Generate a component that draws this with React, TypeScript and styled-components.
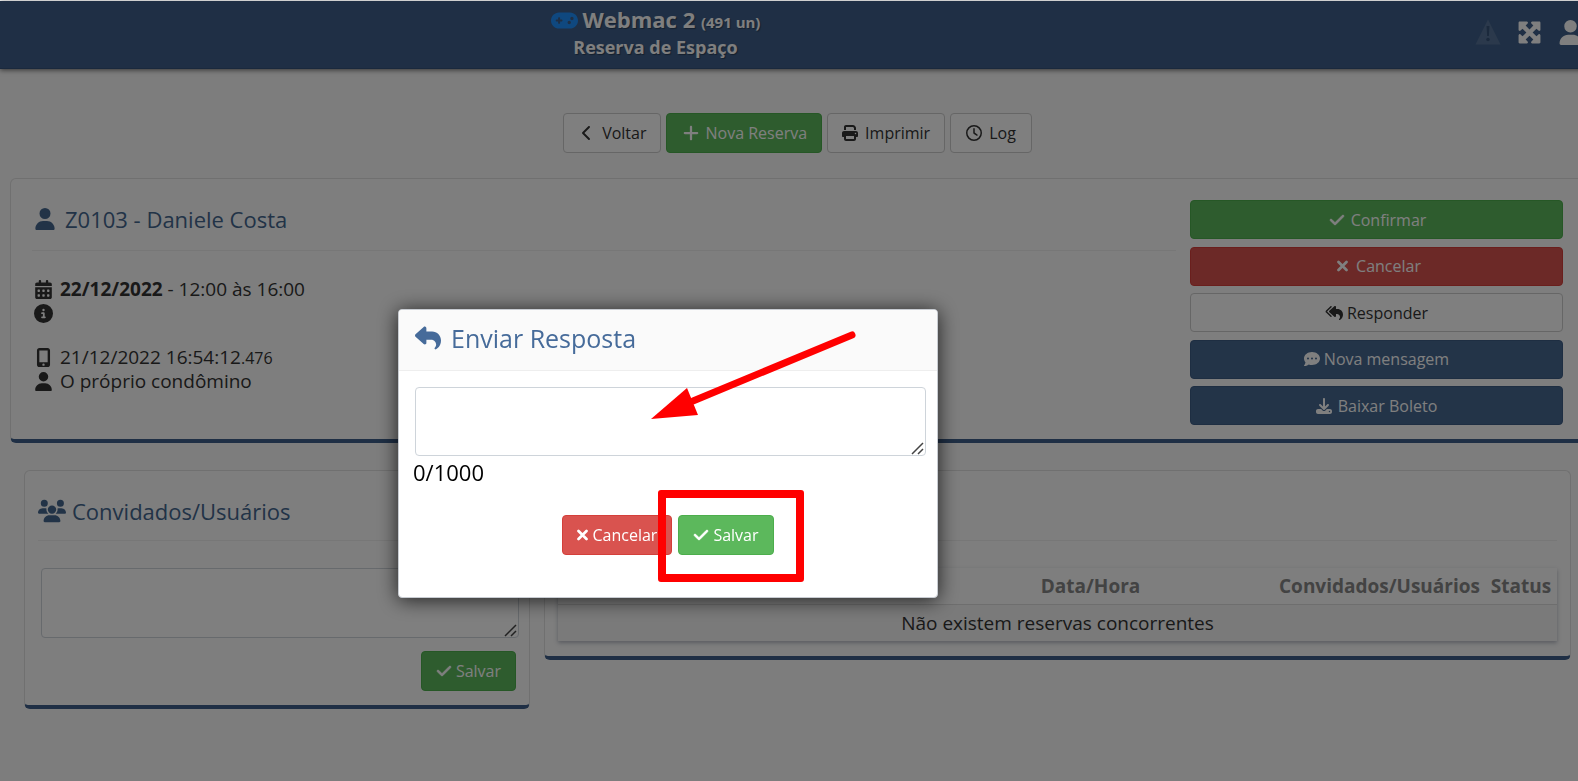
import React from "react";
import styled, { createGlobalStyle, css } from "styled-components";
import {
  FaGamepad, FaMaximize, FaUser, FaChevronLeft, FaPlus, FaPrint, FaRegClock, FaCheck,
  FaReplyAll, FaReply, FaCommentDots, FaDownload, FaCalendarDays, FaCircleInfo,
  FaMobileScreenButton, FaUsers,
} from "react-icons/fa6";

const blue = "#44678f";
const navy = "#3e5f8a";

const GlobalStyle = createGlobalStyle`
  *, *::before, *::after { box-sizing: border-box; }
  body {
    margin: 0;
    padding-top: 1px;
    overflow: hidden;
    background: #fafafa;
    color: #333;
    font-family: "Open Sans", "Noto Sans", sans-serif;
    font-size: 19px;
    font-weight: 400;
    line-height: 24px;
  }
  h1, h2, p { margin: 0; font-weight: inherit; font-size: inherit; }
  button, textarea { font-family: inherit; }
  svg { display: block; flex: none; }
`;

/* The document is one scrollbar wider than the visible area. */
const Page = styled.div`
  width: calc(100% + 17px);
  min-height: calc(100vh - 1px);
`;

const TopBar = styled.header`
  display: grid;
  grid-template-columns: 1fr 284px;
  height: 68px;
  background: ${navy};
  border-bottom: 1px solid #34527a;
  box-shadow: 0 1px 5px rgba(0, 0, 0, 0.6);
  color: #fff;
`;

const Brand = styled.div`
  display: flex;
  flex-direction: column;
  align-items: center;
  padding-top: 6px;
  font-weight: 700;
  font-size: 18px;
  line-height: 27px;
  text-shadow: 1px 1px 1px rgba(0, 0, 0, 0.35);
`;

const BrandName = styled.h1`
  display: flex;
  align-items: center;
  gap: 5px;
  height: 27px;
  && { font-size: 22px; font-weight: 700; }
  svg { color: #1e90ff; }
  small { font-size: 15px; }
`;

const TopActions = styled.nav`
  display: flex;
  align-items: center;
  justify-content: flex-end;
  gap: 16px;
  padding: 0 12px 5px 0;
`;

const IconLink = styled.a<{ $muted?: boolean }>`
  color: #fff;
  opacity: ${(p) => (p.$muted ? 0.12 : 1)};
`;

const Toolbar = styled.div`
  display: flex;
  justify-content: center;
  gap: 5px;
  padding: 44px 0 25px;
`;

type Tone = "plain" | "success" | "danger" | "primary";
const tones = {
  plain: css`background: #fff; border-color: #ccc; color: #333;`,
  success: css`background: #5cb85c; border-color: #4cae4c; color: #fff;`,
  danger: css`background: #d9534f; border-color: #d43f3a; color: #fff;`,
  primary: css`background: #466891; border-color: #3c5c85; color: #fff;`,
};

const Button = styled.button<{ $tone: Tone; $pad?: number; $gap?: number }>`
  display: flex;
  align-items: center;
  justify-content: center;
  gap: ${(p) => p.$gap ?? 4}px;
  height: 40px;
  padding: 0 ${(p) => p.$pad ?? 14}px;
  border: 1px solid;
  border-radius: 4px;
  font-size: 16px;
  font-weight: 400;
  line-height: 22px;
  white-space: nowrap;
  ${(p) => tones[p.$tone]}
`;

const IconBox = styled.span<{ $w: number }>`
  display: flex;
  justify-content: center;
  width: ${(p) => p.$w}px;
`;

const Card = styled.section`
  background: #fcfcfc;
  border: 1px solid #e0e0e0;
  border-bottom: 4px solid ${navy};
  border-radius: 6px;
`;

const BookingCard = styled(Card)`
  display: grid;
  grid-template-columns: 1fr 373px;
  gap: 14px;
  min-height: 265px;
  margin: 0 10px 27px;
  padding: 21px 21px 14px;
`;

const CardTitle = styled.h2<{ $gap: number }>`
  display: flex;
  align-items: center;
  gap: ${(p) => p.$gap}px;
  color: ${blue};
  border-bottom: 1px solid #eee;
  && { font-size: 22px; font-weight: 400; }
`;

const BookingTitle = styled(CardTitle)`
  height: 51px;
  padding: 0 0 12px 2px;
`;

const Details = styled.div`
  display: flex;
  flex-direction: column;
  gap: 20px;
  padding-top: 26px;
`;

const Line = styled.p`
  display: flex;
  align-items: center;
  gap: 5px;
  height: 24px;
  white-space: pre;
  b { font-weight: 700; }
  small { font-size: 16px; }
`;

const Actions = styled.div`
  display: flex;
  flex-direction: column;
  justify-content: space-between;
  ${Button} { height: 39px; }
`;

const Columns = styled.div`
  display: grid;
  grid-template-columns: 506px 1fr;
  align-items: start;
  gap: 14px;
  margin: 0 24px;
`;

const Panel = styled(Card)<{ $bottom: number }>`
  padding: 0 13px ${(p) => p.$bottom}px;
`;

const PanelTitle = styled(CardTitle)`
  height: 70px;
  padding-top: 10px;
`;

const PanelForm = styled.form`
  display: flex;
  flex-direction: column;
  align-items: flex-end;
  gap: 13px;
  padding: 27px 0 0 3px;
`;

const Field = styled.div<{ $wide?: boolean }>`
  position: relative;
  align-self: stretch;
  margin-right: ${(p) => (p.$wide ? "-3px" : "0")};
`;

const TextArea = styled.textarea<{ $h: number }>`
  display: block;
  width: 100%;
  height: ${(p) => p.$h}px;
  background: #fff;
  border: 1px solid #ced4da;
  border-radius: 4px;
  font-size: 16px;
  resize: none;
`;

const GripSvg = styled.svg`
  position: absolute;
  right: 2px;
  bottom: 1px;
  pointer-events: none;
`;

const Table = styled.table`
  width: 100%;
  margin-top: 27px;
  table-layout: fixed;
  border-collapse: collapse;
  background: #fcfcfc;
  box-shadow: 0 2px 4px rgba(50, 60, 90, 0.35);
  th, td { height: 37px; padding: 0; text-align: center; }
  th { color: #868686; font-weight: 700; }
  thead th, thead td { height: 36px; border-bottom: 1px solid #ddd; }
  tbody td { background: #f4f4f4; }
`;

const Column = styled.col<{ $w?: number }>`
  width: ${(p) => (p.$w ? `${p.$w}px` : "auto")};
`;

const Backdrop = styled.div`
  position: fixed;
  inset: 1px 0 0;
  background: rgba(0, 0, 0, 0.5);
`;

const Dialog = styled.div`
  position: absolute;
  top: 308px;
  left: calc(50% - 391px);
  width: 540px;
  background: #fff;
  border: 1px solid #c8ccd2;
  border-radius: 4px;
  box-shadow: 0 2px 20px rgba(0, 0, 0, 0.75);
`;

const DialogHeader = styled.div`
  display: flex;
  align-items: center;
  gap: 10px;
  height: 61px;
  padding: 0 16px 4px;
  background: #fafafa;
  border-bottom: 1px solid #eee;
  border-radius: 3px 3px 0 0;
  color: #466b9a;
  h2 { font-size: 25px; font-weight: 400; line-height: 34px; }
`;

const DialogForm = styled.form`
  padding: 16px 11px 42px 16px;
`;

const Counter = styled.label`
  display: block;
  margin: 0 0 27px -2px;
  color: #000;
  font-size: 22px;
  line-height: 32px;
`;

const DialogButtons = styled.div`
  display: flex;
  justify-content: center;
  gap: 6px;
  padding-right: 5px;
`;

const Highlight = styled.div`
  position: absolute;
  top: 180px;
  left: 259px;
  width: 146px;
  height: 92px;
  border: 8px solid #f00;
  border-radius: 3px;
  pointer-events: none;
`;

const Arrow = styled.svg`
  position: absolute;
  top: 20px;
  left: 252px;
  pointer-events: none;
`;

function WarningIcon() {
  return (
    <svg width="26" height="26" viewBox="0 0 26 26">
      <path d="M13 0.5 L25.5 25.5 H0.5 Z" fill="#fff" />
      <path d="M11.500 7h3l-.6 10h-1.800z" fill="#000" />
      <circle cx="13" cy="20.500" r="1.800" fill="#000" />
    </svg>
  );
}

function CheckIcon() {
  return <FaCheck size={16} stroke="currentColor" strokeWidth={20} />;
}

function CrossIcon() {
  return (
    <svg width="11" height="16" viewBox="0 0 11 16">
      <path d="M1.500 4 L9.500 12 M9.500 4 L1.500 12" stroke="currentColor" strokeWidth="2.700" strokeLinecap="round" />
    </svg>
  );
}

function Grip() {
  return (
    <GripSvg width="13" height="13" viewBox="0 0 13 13" aria-hidden="true">
      <path d="M1 12 L12 1 M7 12 L12 7" stroke="#444" strokeWidth="1.500" />
    </GripSvg>
  );
}

export default function App() {
  return (
    <>
      <GlobalStyle />
      <Page>
        <TopBar>
          <Brand>
            <BrandName>
              <FaGamepad size={27} />
              <span>Webmac 2 <small>(491 un)</small></span>
            </BrandName>
            <span>Reserva de Espaço</span>
          </Brand>
          <TopActions>
            <IconLink href="#" $muted aria-label="Alertas"><WarningIcon /></IconLink>
            <IconLink href="#" aria-label="Tela cheia"><FaMaximize size={25} /></IconLink>
            <IconLink href="#" aria-label="Perfil"><FaUser size={25} /></IconLink>
          </TopActions>
        </TopBar>

        <main>
          <Toolbar>
            <Button $tone="plain" $pad={13} $gap={5}><IconBox $w={20}><FaChevronLeft size={16} /></IconBox>Voltar</Button>
            <Button $tone="success" $gap={5}><IconBox $w={20}><FaPlus size={18} /></IconBox>Nova Reserva</Button>
            <Button $tone="plain" $gap={7}><FaPrint size={16} />Imprimir</Button>
            <Button $tone="plain" $pad={15} $gap={7}><FaRegClock size={16} />Log</Button>
          </Toolbar>

          <BookingCard>
            <div>
              <BookingTitle $gap={9}><FaUser size={22} />Z0103 - Daniele Costa</BookingTitle>
              <Details>
                <div>
                  <Line><IconBox $w={23}><FaCalendarDays size={19} /></IconBox><span><b>22/12/2022</b> - 12:00 às 16:00</span></Line>
                  <Line><IconBox $w={23}><FaCircleInfo size={19} /></IconBox></Line>
                </div>
                <div>
                  <Line><IconBox $w={23}><FaMobileScreenButton size={19} /></IconBox><span>21/12/2022 16:54:12<small>.476</small></span></Line>
                  <Line><IconBox $w={23}><FaUser size={19} /></IconBox>O próprio condômino</Line>
                </div>
              </Details>
            </div>
            <Actions>
              <Button $tone="success"><IconBox $w={20}><CheckIcon /></IconBox>Confirmar</Button>
              <Button $tone="danger"><IconBox $w={20}><CrossIcon /></IconBox>Cancelar</Button>
              <Button $tone="plain"><FaReplyAll size={18} />Responder</Button>
              <Button $tone="primary"><FaCommentDots size={16} />Nova mensagem</Button>
              <Button $tone="primary" $gap={6}><FaDownload size={16} />Baixar Boleto</Button>
            </Actions>
          </BookingCard>

          <Columns>
            <Panel $bottom={14}>
              <PanelTitle $gap={6}><FaUsers size={28} />Convidados/Usuários</PanelTitle>
              <PanelForm>
                <Field $wide>
                  <TextArea $h={70} aria-label="Convidados/Usuários" />
                  <Grip />
                </Field>
                <Button type="button" $tone="success"><CheckIcon />Salvar</Button>
              </PanelForm>
            </Panel>
            <Panel $bottom={15}>
              <PanelTitle $gap={6} />
              <Table>
                <colgroup>
                  <Column />
                  <Column $w={367} />
                  <Column $w={211} />
                  <Column $w={72} />
                </colgroup>
                <thead>
                  <tr><td /><th>Data/Hora</th><th>Convidados/Usuários</th><th>Status</th></tr>
                </thead>
                <tbody>
                  <tr><td colSpan={4}>Não existem reservas concorrentes</td></tr>
                </tbody>
              </Table>
            </Panel>
          </Columns>
        </main>
      </Page>

      <Backdrop>
        <Dialog role="dialog" aria-labelledby="dialog-title">
          <DialogHeader>
            <FaReply size={26} />
            <h2 id="dialog-title">Enviar Resposta</h2>
          </DialogHeader>
          <DialogForm>
            <Field>
              <TextArea id="reply" $h={69} />
              <Grip />
            </Field>
            <Counter htmlFor="reply">0/1000</Counter>
            <DialogButtons>
              <Button type="button" $tone="danger"><CrossIcon />Cancelar</Button>
              <Button type="button" $tone="success"><CheckIcon />Salvar</Button>
            </DialogButtons>
          </DialogForm>
          <Highlight />
          <Arrow width="210" height="92" viewBox="0 0 210 92">
            <path d="M201 5 L42 71" stroke="#f00" strokeWidth="7" strokeLinecap="round" />
            <path d="M0 89 L36 58 L47 85 Z" fill="#f00" />
          </Arrow>
        </Dialog>
      </Backdrop>
    </>
  );
}
